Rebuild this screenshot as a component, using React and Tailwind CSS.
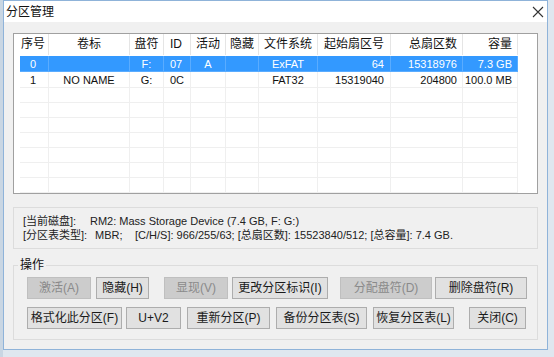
import React from "react";

const font = { fontFamily: '"Liberation Sans", "Noto Sans CJK SC", sans-serif' };

const columns = [
  { key: "no", title: "序号", w: 35, head: "text-left pl-[7px]", body: "text-left pl-[10px]" },
  { key: "label", title: "卷标", w: 81, head: "text-center", body: "text-center" },
  { key: "drive", title: "盘符", w: 34, head: "text-center", body: "text-center" },
  { key: "id", title: "ID", w: 27, head: "text-left pl-[6px]", body: "text-left pl-[6px]" },
  { key: "active", title: "活动", w: 35, head: "text-center", body: "text-center" },
  { key: "hidden", title: "隐藏", w: 33, head: "text-center", body: "text-center" },
  { key: "fs", title: "文件系统", w: 59, head: "text-center", body: "text-center" },
  { key: "start", title: "起始扇区号", w: 73, head: "text-right pr-[6px]", body: "text-right pr-[6px]" },
  { key: "total", title: "总扇区数", w: 72, head: "text-right pr-[5px]", body: "text-right pr-[5px]" },
  { key: "size", title: "容量", w: 55, head: "text-right pr-[5px]", body: "text-right pr-[5px]" },
];

const rows = [
  { no: "0", label: "", drive: "F:", id: "07", active: "A", hidden: "", fs: "ExFAT", start: "64", total: "15318976", size: "7.3 GB", selected: true },
  { no: "1", label: "NO NAME", drive: "G:", id: "0C", active: "", hidden: "", fs: "FAT32", start: "15319040", total: "204800", size: "100.0 MB" },
];

const emptyRows = Array.from({ length: 7 });

const Btn = ({ children, w, disabled }) => (
  <button
    style={{ width: w }}
    className={
      "h-[22px] text-[12px] leading-none border " +
      (disabled
        ? "bg-[#cccccc] border-[#bfbfbf] text-[#8a8a8a]"
        : "bg-[#e1e1e1] border-[#adadad] text-[#1a1a1a]")
    }
  >
    {children}
  </button>
);

export default function App() {
  return (
    <div style={font} className="w-[554px] h-[357px] bg-[#dfe7ef] overflow-hidden flex">
      <div className="w-[3px] bg-[#c9d6e3]" />
      <div className="w-[545px] h-[350px] bg-[#f0f0f0] border border-[#8fb3d9] flex flex-col">
        {/* title bar */}
        <div className="h-[21px] bg-white flex items-center justify-between pl-[2px] pr-[3px]">
          <span className="text-[12px] text-[#111]">分区管理</span>
          <svg width="12" height="12" viewBox="0 0 12 12">
            <path d="M1 1 L11 11 M11 1 L1 11" stroke="#333" strokeWidth="1.1" />
          </svg>
        </div>

        <div className="flex flex-col px-[9px] pt-[11px]">
          {/* list view */}
          <div className="h-[161px] bg-white border border-[#a0a0a0] overflow-hidden text-[11px] text-[#111]">
            <div className="flex h-[21px] items-center">
              {columns.map((c) => (
                <div
                  key={c.key}
                  style={{ width: c.w }}
                  className={"h-full leading-[21px] border-r border-[#e5e5e5] text-[12px] " + c.head}
                >
                  {c.title}
                </div>
              ))}
            </div>
            <div className="pt-[1px]">
              {rows.map((r, i) => (
                <div key={i} className="flex h-[16px]">
                  <div className="w-[6px]" />
                  {columns.map((c, j) => (
                    <div
                      key={c.key}
                      style={{ width: j === 0 ? c.w - 6 : c.w }}
                      className={
                        "leading-[16px] border-r border-b " +
                        (r.selected
                          ? "bg-[#3399ff] text-white border-[#5aacff] "
                          : "border-[#efefef] ") +
                        c.body
                      }
                    >
                      {r[c.key]}
                    </div>
                  ))}
                </div>
              ))}
              {emptyRows.map((_, i) => (
                <div key={"e" + i} className="flex h-[15px]">
                  <div className="w-[6px]" />
                  {columns.map((c, j) => (
                    <div
                      key={c.key}
                      style={{ width: j === 0 ? c.w - 6 : c.w }}
                      className="border-r border-b border-[#efefef]"
                    />
                  ))}
                </div>
              ))}
            </div>
          </div>

          {/* disk info */}
          <div className="mt-[13px] h-[42px] border border-[#dcdcdc] flex flex-col justify-center pl-[9px] text-[11px] text-[#222] leading-[14px]">
            <div className="flex">
              <span className="w-[67px]">[当前磁盘]:</span>
              <span>RM2: Mass Storage Device (7.4 GB, F: G:)</span>
            </div>
            <div className="flex">
              <span className="w-[72px]">[分区表类型]:</span>
              <span className="w-[40px]">MBR;</span>
              <span>[C/H/S]: 966/255/63; [总扇区数]: 15523840/512; [总容量]: 7.4 GB.</span>
            </div>
          </div>

          {/* operations */}
          <div className="mt-[16px] relative">
            <span className="absolute -top-[9px] left-[5px] px-[2px] bg-[#f0f0f0] text-[12px] text-[#111]">操作</span>
            <div className="h-[75px] border border-[#dcdcdc] pt-[11px] pl-[13px] flex flex-col gap-[8px]">
              <div className="flex">
                <Btn w={64} disabled>激活(A)</Btn>
                <div className="w-[5px]" />
                <Btn w={53}>隐藏(H)</Btn>
                <div className="w-[15px]" />
                <Btn w={64} disabled>显现(V)</Btn>
                <div className="w-[4px]" />
                <Btn w={96}>更改分区标识(I)</Btn>
                <div className="w-[12px]" />
                <Btn w={92} disabled>分配盘符(D)</Btn>
                <div className="w-[3px]" />
                <Btn w={92}>删除盘符(R)</Btn>
              </div>
              <div className="flex">
                <Btn w={95}>格式化此分区(F)</Btn>
                <div className="w-[4px]" />
                <Btn w={55}>U+V2</Btn>
                <div className="w-[6px]" />
                <Btn w={83}>重新分区(P)</Btn>
                <div className="w-[6px]" />
                <Btn w={91}>备份分区表(S)</Btn>
                <div className="w-[6px]" />
                <Btn w={81}>恢复分区表(L)</Btn>
                <div className="w-[15px]" />
                <Btn w={57}>关闭(C)</Btn>
              </div>
            </div>
          </div>
        </div>
      </div>
    </div>
  );
}
